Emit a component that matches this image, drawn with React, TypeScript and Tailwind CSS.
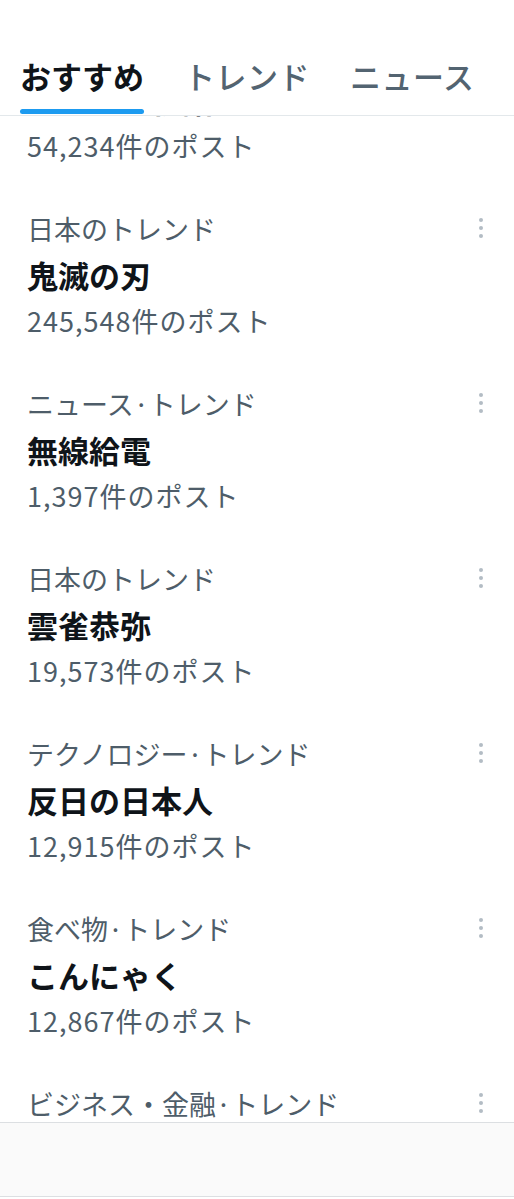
const font = {
  fontFamily: '"Noto Sans CJK JP", "Noto Sans", sans-serif',
};

interface Trend {
  category: string;
  title: string;
  count: string;
}

const trends: Trend[] = [
  { category: "日本のトレンド", title: "ジョーク初詣", count: "54,234件のポスト" },
  { category: "日本のトレンド", title: "鬼滅の刃", count: "245,548件のポスト" },
  { category: "ニュース·トレンド", title: "無線給電", count: "1,397件のポスト" },
  { category: "日本のトレンド", title: "雲雀恭弥", count: "19,573件のポスト" },
  { category: "テクノロジー·トレンド", title: "反日の日本人", count: "12,915件のポスト" },
  { category: "食べ物·トレンド", title: "こんにゃく", count: "12,867件のポスト" },
  { category: "ビジネス・金融·トレンド", title: "株価", count: "8,102件のポスト" },
];

const MoreDots = () => (
  <div className="flex flex-col items-center gap-[4px]">
    <span className="block h-[4px] w-[4px] rounded-full bg-[#b3bcc4]" />
    <span className="block h-[4px] w-[4px] rounded-full bg-[#b3bcc4]" />
    <span className="block h-[4px] w-[4px] rounded-full bg-[#b3bcc4]" />
  </div>
);

const TrendRow = ({ trend }: { trend: Trend }) => (
  <div className="flex justify-between pl-[27px] pr-[31px] pt-[18px] pb-[19px]">
    <div className="flex flex-col">
      <span className="text-[27px] leading-[46px] text-[#4e5d69]">{trend.category}</span>
      <span className="text-[31px] font-bold leading-[46px] text-[#0f1419]">{trend.title}</span>
      <span className="text-[27px] leading-[46px] tracking-[1px] text-[#4e5d69]">{trend.count}</span>
    </div>
    <div className="pt-[12px]">
      <MoreDots />
    </div>
  </div>
);

export default function App() {
  const tabs = ["おすすめ", "トレンド", "ニュース"];
  return (
    <div className="flex h-[1199px] w-[514px] flex-col bg-white" style={font}>
      <header className="flex h-[116px] shrink-0 items-end gap-[40px] border-b border-[#e3e8eb] pl-[20px]">
        {tabs.map((t, i) => (
          <div key={t} className="flex flex-col">
            <span
              className={
                i === 0
                  ? "text-[31px] font-bold leading-[40px] text-[#0f1419]"
                  : "text-[31px] font-medium leading-[40px] tracking-[0.5px] text-[#536471]"
              }
            >
              {t}
            </span>
            <span
              className={
                i === 0
                  ? "mt-[13px] mb-[1px] block h-[5px] rounded-full bg-[#1d9bf0]"
                  : "mt-[13px] mb-[1px] block h-[5px]"
              }
            />
          </div>
        ))}
      </header>
      <div className="h-[1006px] shrink-0 overflow-hidden">
        <div className="-mt-[103px]">
          {trends.map((t, i) => (
            <TrendRow key={i} trend={t} />
          ))}
        </div>
      </div>
      <div className="h-[75px] shrink-0 border-y border-[#dcdfe2] bg-[#fafafa]" />
    </div>
  );
}
